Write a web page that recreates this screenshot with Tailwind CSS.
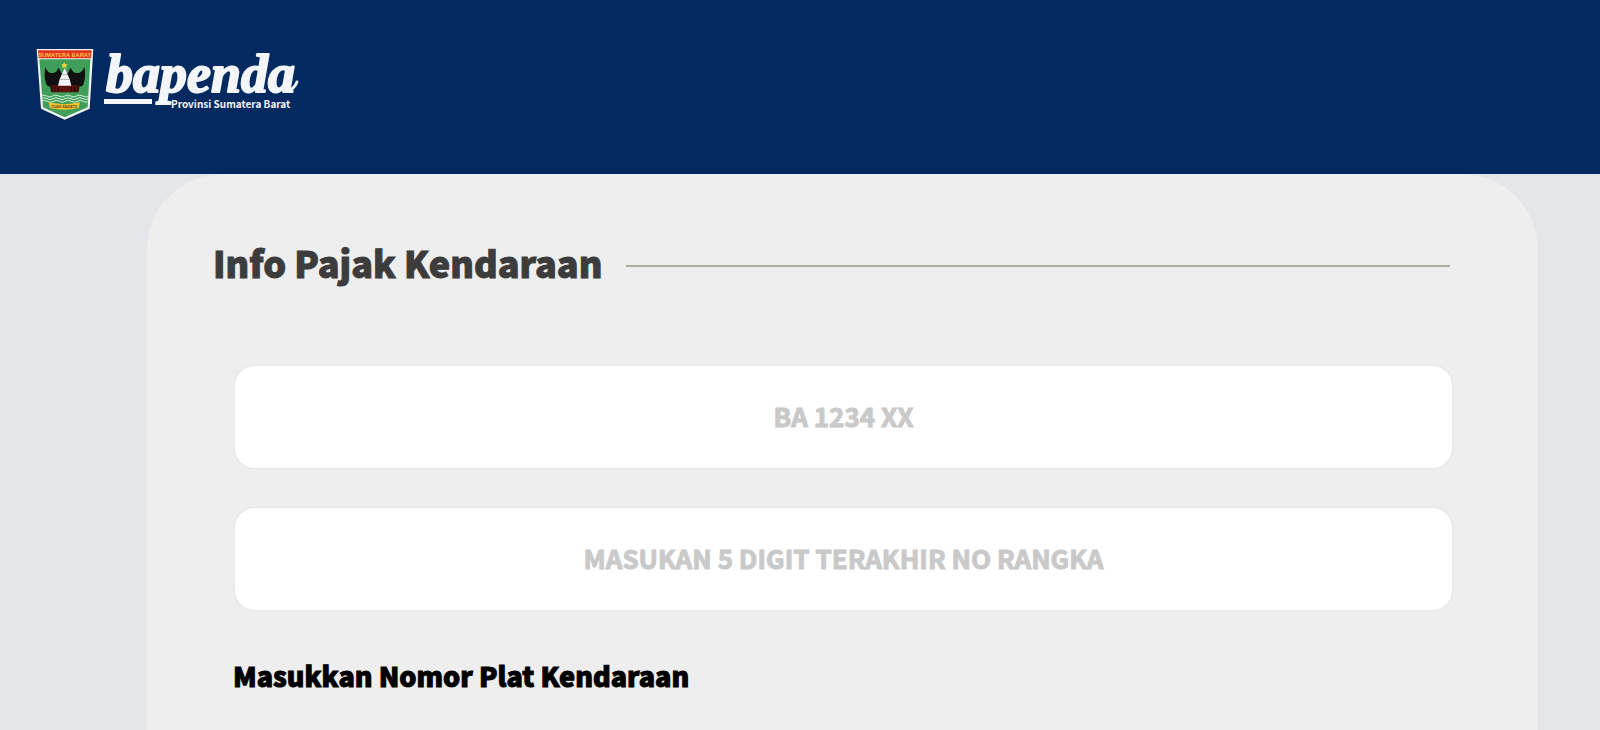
<!DOCTYPE html>
<html lang="id">
    <head>
        <meta charset="UTF-8">
        <meta name="viewport" content="width=device-width, initial-scale=1.0">
        <title>Info Pajak Kendaraan - Bapenda Provinsi Sumatera Barat</title>
        <script src="https://cdn.jsdelivr.net/npm/@tailwindcss/browser@4"></script>
    </head>
    <body class="min-h-screen flex flex-col bg-[#e5e6e9] font-['Noto_Sans_CJK_JP','Noto_Sans',sans-serif]">
        <header class="bg-[#032961] h-[174px] shrink-0 pt-12 ps-9">
            <a href="/" class="inline-flex items-start gap-2" aria-label="Bapenda Provinsi Sumatera Barat">
                <!-- Provincial emblem -->
                <svg class="w-[58px] h-[72px]" viewBox="48 40 174 216" fill="none">
                    <path d="M50 43H220L209 222L134 255L63 222Z" fill="#f4f4f0" />
                    <path d="M58 74H211L203 218L134 248L69 218Z" fill="#3f9e5a" />
                    <path d="M54 47H215L213 71H56Z" fill="#e3301f" />
                    <text x="134" y="66" text-anchor="middle" font-family="Liberation Sans" font-weight="700" font-size="17" fill="#f7c948">SUMATERA BARAT</text>
                    <path d="M76 96C80 112 94 120 108 112L116 99L124 116H144L151 99L160 112C174 120 188 112 193 96C197 118 195 142 188 153L176 157H92L82 153C74 142 72 118 76 96Z" fill="#101010" />
                    <path d="M90 152H180L175 173H94Z" fill="#5a130f" />
                    <path d="M94 154V170M104 156V172M114 156V172M154 156V172M164 156V172M174 154V170" stroke="#1c0605" stroke-width="3" />
                    <path d="M134 100L141 116L149 134L154 153H114L119 134L127 116Z" fill="#f6f6f6" />
                    <path d="M124 120H144M120 134H148" stroke="#8d8d8d" stroke-width="2" />
                    <path d="M133 82L136 89L143 89L138 94L140 101L133 97L126 101L128 94L123 89L130 89Z" fill="#f3d531" />
                    <path d="M62 184Q71 178 80 184T98 184T116 184T134 184T152 184T170 184T188 184T205 184M63 192Q72 186 81 192T99 192T117 192T135 192T153 192T171 192T189 192T204 192M64 200Q73 194 82 200T100 200T118 200T136 200T154 200T172 200T190 200T203 200" stroke="#d9f0df" stroke-width="3" />
                    <path d="M86 203Q133 214 180 203L176 220Q133 230 90 220Z" fill="#efc22e" />
                    <text x="133" y="220" text-anchor="middle" font-family="Liberation Sans" font-weight="700" font-size="11" fill="#6d4a12">TUAH SAKATO</text>
                </svg>
                <!-- Wordmark -->
                <svg class="w-[200px] h-[72px] overflow-visible" viewBox="0 0 200 72" fill="#f3f5f8">
                    <text x="4" y="44" font-family="Liberation Serif" font-style="italic" font-weight="700" font-size="54" stroke="#f3f5f8" stroke-width="2" stroke-linejoin="round">bapenda</text>
                    <path d="M184 43Q192 42 195 34" fill="none" stroke="#f3f5f8" stroke-width="3" stroke-linecap="round" />
                    <rect x="2" y="51" width="48" height="5" />
                    <text x="69" y="60" font-family="Noto Sans CJK JP" font-weight="700" font-size="10">Provinsi Sumatera Barat</text>
                </svg>
            </a>
        </header>

        <main class="flex-1 ms-[147px] me-[62px] bg-[#eeeeee] rounded-t-[76px] ps-[66px] pe-[84px] pt-[66px] pb-8">
            <div class="flex items-center gap-6 me-1">
                <h1 class="pb-2 text-[36px] leading-[44px] font-black text-[#3c3c3c] [-webkit-text-stroke:1px_#3c3c3c]">Info Pajak Kendaraan</h1>
                <div class="flex-1 h-[2px] bg-[#b0aca4]"></div>
            </div>

            <form action="" class="mt-[72px] ms-5 flex flex-col">
                <div class="flex flex-col gap-9">
                    <input id="plat" name="plat" type="text" placeholder="BA 1234 XX" aria-label="Nomor plat kendaraan"
                        class="w-full h-[106px] pb-1 bg-white border-2 border-[#e9e9e9] rounded-[22px] text-center text-[26px] font-bold [-webkit-text-stroke:1px_#c9c9c9] placeholder:text-[#c9c9c9] focus:outline-none" />
                    <input id="rangka" name="rangka" type="text" placeholder="MASUKAN 5 DIGIT TERAKHIR NO RANGKA" aria-label="5 digit terakhir nomor rangka"
                        class="w-full h-[106px] pb-1 bg-white border-2 border-[#e9e9e9] rounded-[22px] text-center text-[26px] font-bold [-webkit-text-stroke:1px_#c9c9c9] placeholder:text-[#c9c9c9] focus:outline-none" />
                </div>
                <label for="plat" class="mt-11 text-[27px] leading-[40px] font-black text-black [-webkit-text-stroke:1px_#000000]">Masukkan Nomor Plat Kendaraan</label>
            </form>
        </main>
    </body>
</html>
